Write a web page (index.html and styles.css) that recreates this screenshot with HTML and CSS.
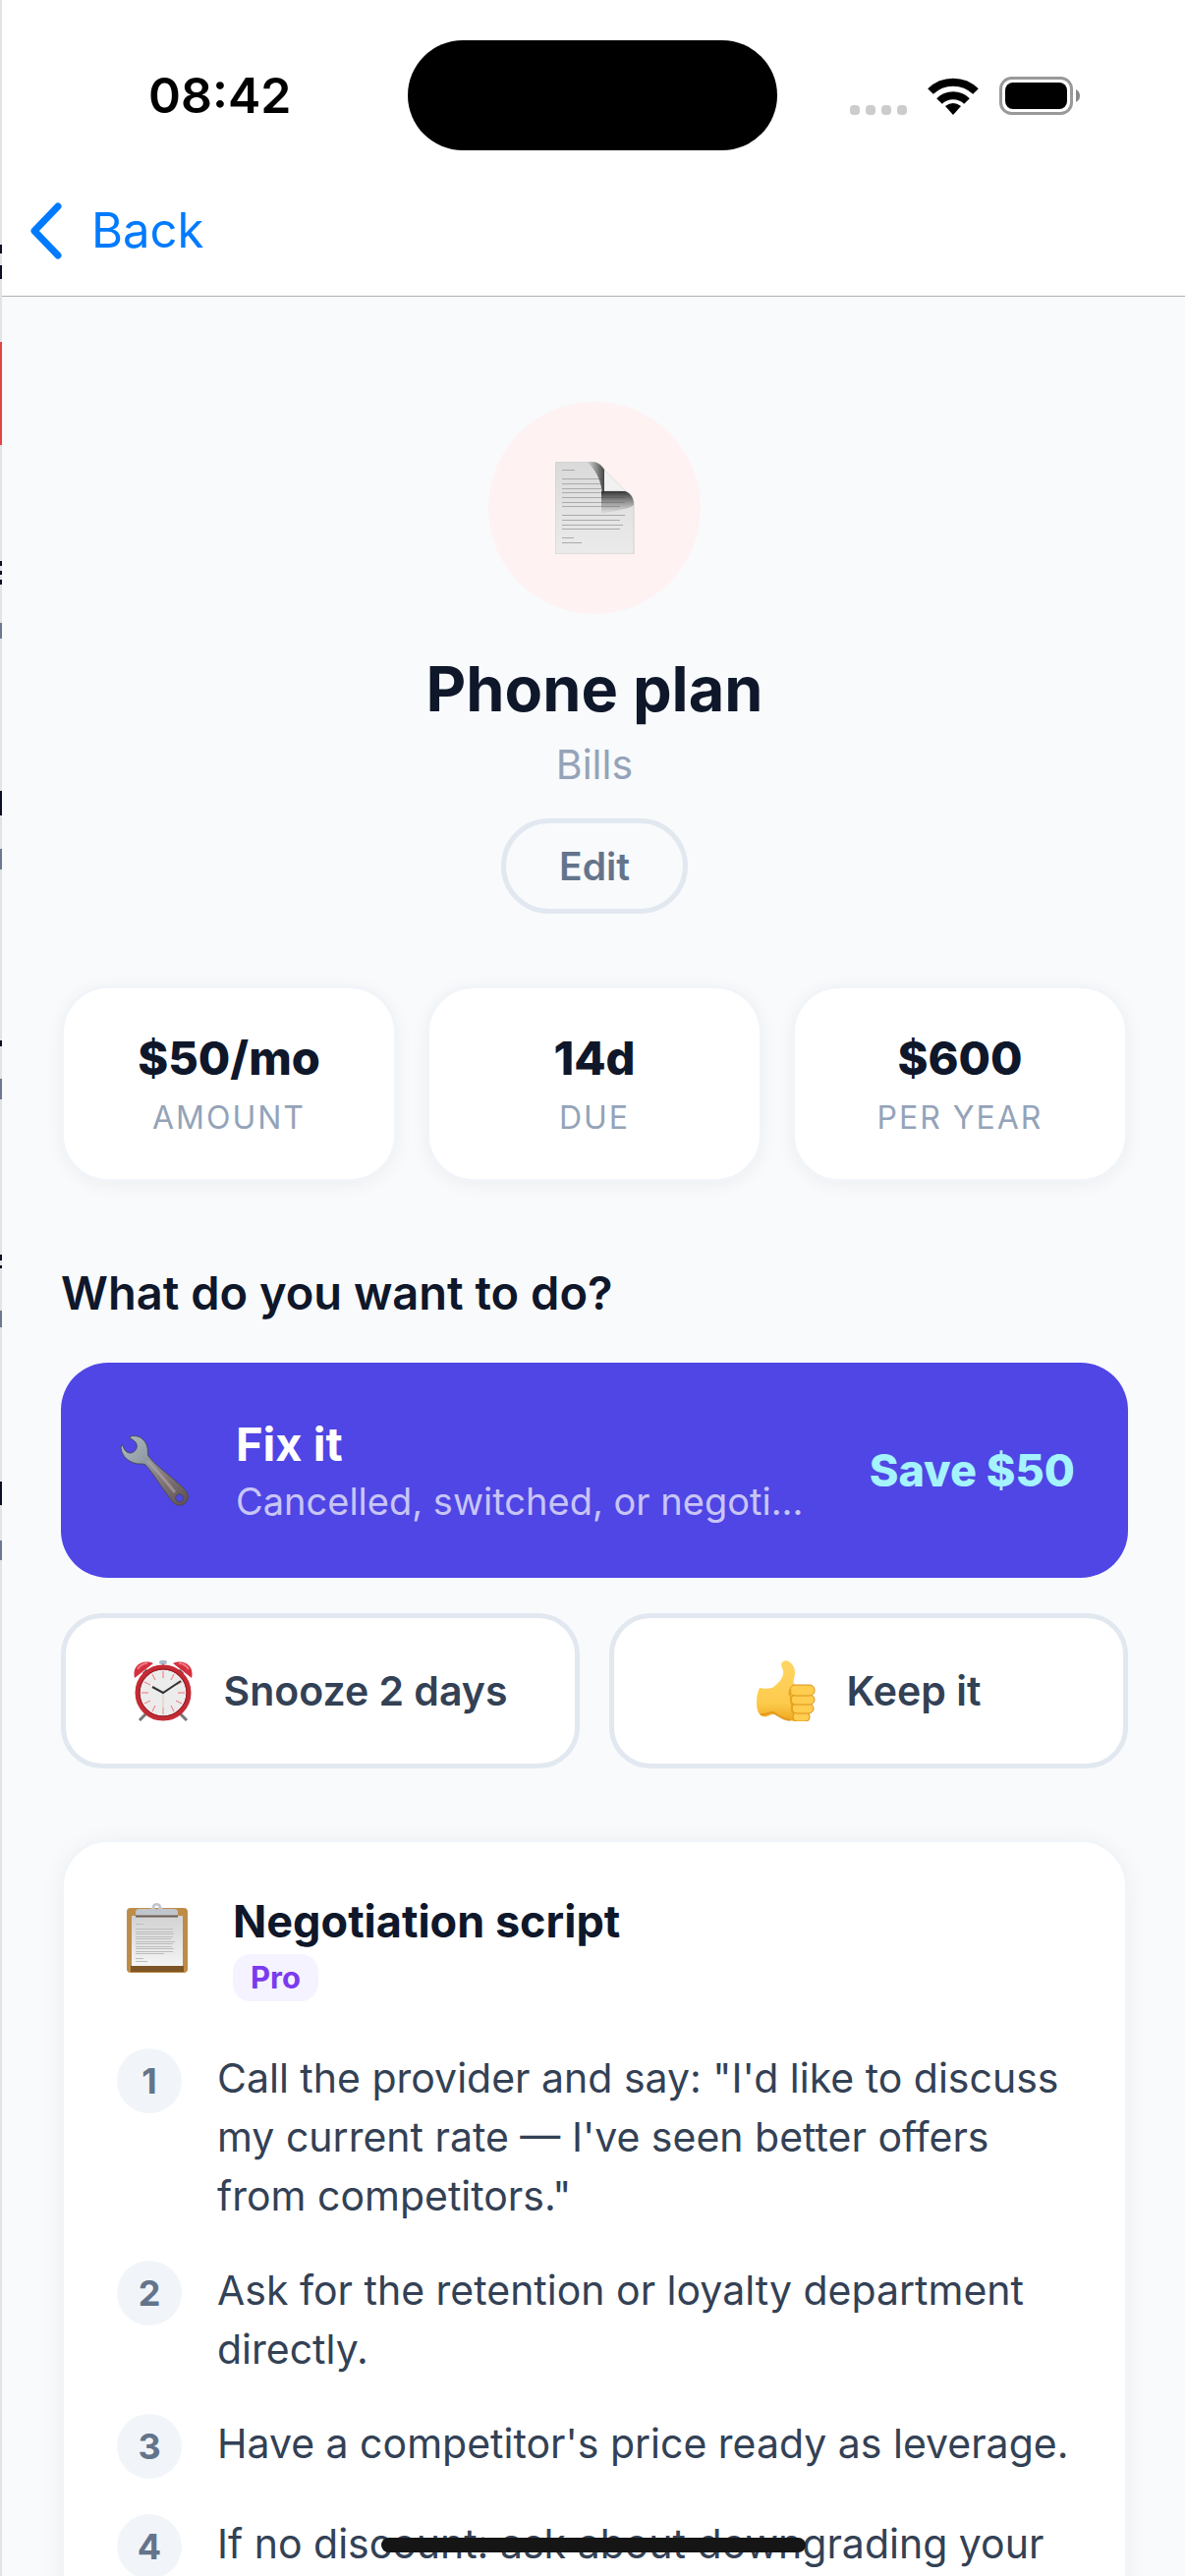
FILE: index.html
```html
<!DOCTYPE html>
<html lang="en">
<head>
  <meta charset="UTF-8">
  <meta name="viewport" content="width=device-width, initial-scale=1">
  <title>Phone plan</title>
  <link rel="stylesheet" href="styles.css">
</head>
<body>

  <!-- edge of the list screen underneath -->
  <svg class="peek" width="2" height="2622" aria-hidden="true">
    <rect width="2" height="2622" fill="#e2e3e5"/>
    <path fill="#0b1024" d="M0 249h2v9H0zM0 270h2v14H0zM0 571h2v5H0zM0 581h2v4H0zM0 590h2v5H0zM0 805h2v25H0zM0 1059h2v6H0zM0 1277h2v6H0zM0 1288h2v3H0zM0 1508h2v24H0z"/>
    <path fill="#e24444" d="M0 348h2v105H0z"/>
    <path fill="#6b7a90" d="M0 634h2v16H0zM0 864h2v21H0zM0 1098h2v21H0zM0 1334h2v17H0zM0 1568h2v20H0z"/>
  </svg>

  <div class="screen">
    <header>
      <div class="status-bar">
        <span class="time">08:42</span>
        <span class="island"></span>
        <div class="status-icons">
          <svg width="58" height="10" viewBox="0 0 58 10" fill="#ccc">
            <rect width="10" height="10" rx="4"/>
            <rect x="16" width="10" height="10" rx="4"/>
            <rect x="32" width="10" height="10" rx="4"/>
            <rect x="48" width="10" height="10" rx="4"/>
          </svg>
          <svg width="52" height="38" viewBox="0 0 52 38">
            <path d="M3 14a33 33 0 0 1 46 0M12 24a20 20 0 0 1 28 0" fill="none" stroke="#000" stroke-width="8"/>
            <path d="M26 38l-8-9q8-6 16 0z"/>
          </svg>
          <svg width="82" height="39" viewBox="0 0 82 39">
            <rect x="1.5" y="1.5" width="72" height="36" rx="11" fill="none" stroke="#999" stroke-width="3"/>
            <rect x="6" y="6" width="63" height="27" rx="8"/>
            <path d="M78 13q4 2 4 6.500t-4 6.500z" fill="#888"/>
          </svg>
        </div>
      </div>
      <nav>
        <a class="back" href="#">
          <svg width="33" height="58" viewBox="0 0 33 58">
            <path d="M29 4L5 29l24 25" fill="none" stroke="#007aff" stroke-width="7" stroke-linecap="round" stroke-linejoin="round"/>
          </svg>
          Back
        </a>
      </nav>
    </header>

    <main>
      <section class="hero">
        <div class="avatar">
          <svg width="81" height="94" viewBox="0 0 81 94">
            <defs>
              <linearGradient id="paper" x1="0" y1="0" x2="0" y2="1">
                <stop offset="0" stop-color="#dadada"/>
                <stop offset="1" stop-color="#ebebeb"/>
              </linearGradient>
              <linearGradient id="curl-left" x1="0" y1="0" x2="1" y2="0">
                <stop offset="0" stop-color="#555" stop-opacity="0"/>
                <stop offset="1" stop-color="#444"/>
              </linearGradient>
              <linearGradient id="curl-down" x1="0" y1="0" x2="0" y2="1">
                <stop offset="0" stop-color="#333"/>
                <stop offset="1" stop-color="#777" stop-opacity="0"/>
              </linearGradient>
            </defs>
            <path d="M0 0h36c7 0 11 3 14 8l22 22c5 3 8 7 8 13v51H0z" fill="url(#paper)" stroke="#cfcfcf"/>
            <path d="M7 8.500h13M7 17.500h42M7 22.500h42M7 27.500h40M7 31.500h42M7 36.500h64M7 41.500h64M7 45.500h59M7 54.500h64M7 59.500h59M7 64.500h62M7 68.500h59M7 77.500h12M7 82.500h20" stroke="#aaa"/>
            <path d="M32 0h4c7 0 11 3 14 8v22l-2 4C47 18 41 8 32 0z" fill="url(#curl-left)"/>
            <path d="M47 30h24c6 2 9 7 9 14-5 5-20 5-33 10z" fill="url(#curl-down)"/>
            <path d="M50 8l22 22c-6-2-14-1-22-1z" fill="#f1f1f1"/>
          </svg>
        </div>
        <h1>Phone plan</h1>
        <p class="category">Bills</p>
        <button class="edit">Edit</button>
      </section>

      <section class="stats">
        <div class="stat">
          <div class="stat-value">$50/mo</div>
          <div class="stat-label">AMOUNT</div>
        </div>
        <div class="stat">
          <div class="stat-value">14d</div>
          <div class="stat-label">DUE</div>
        </div>
        <div class="stat">
          <div class="stat-value">$600</div>
          <div class="stat-label">PER YEAR</div>
        </div>
      </section>

      <section class="actions">
        <h2>What do you want to do?</h2>
        <button class="fix">
          <span class="icon">
            <svg width="71" height="72" viewBox="0 0 71 72">
              <defs>
                <linearGradient id="steel" x1="0" y1="0" x2="1" y2="1">
                  <stop offset="0" stop-color="#b4c0c8"/>
                  <stop offset=".35" stop-color="#8f9aa3"/>
                  <stop offset=".6" stop-color="#85797c"/>
                  <stop offset="1" stop-color="#5d5052"/>
                </linearGradient>
              </defs>
              <path fill="url(#steel)" stroke="#4b4a55" fill-rule="evenodd" d="M11 1c8-2 15 3 17 11 1 4 0 7 1 9 7 9 17 16 25 23 5 5 13 10 15 16 2 7-4 12-10 11-5-1-8-7-11-11-7-9-13-20-22-30-3-2-7 0-12-2C6 25 1 19 1 11l2-1c1 5 4 8 8 8 5-1 7-5 6-9-1-3-4-5-7-6zM62 60a4 4 0 1 0 1 7 4 4 0 0 0-1-7z"/>
              <path d="M28 26c10 10 20 22 28 32" fill="none" stroke="#b2a6a8" stroke-width="3" opacity=".6"/>
            </svg>
          </span>
          <span class="fix-text">
            <span class="fix-title">Fix it</span>
            <span class="fix-sub">Cancelled, switched, or negoti...</span>
          </span>
          <span class="fix-save">Save $50</span>
        </button>

        <div class="action-row">
          <button class="action">
            <svg width="60" height="62" viewBox="0 0 60 62">
              <path d="M14 53l-8 8M46 53l8 8" stroke="#777" stroke-width="3"/>
              <rect x="26" y="0" width="8" height="4" rx="2" fill="#a9bccb"/>
              <path d="M30 3v4" stroke="#999" stroke-width="2"/>
              <path d="M1 18C-2 6 8-2 20 3zM59 18C62 6 52-2 40 3z" fill="#d5303f"/>
              <path d="M4 9q4-6 10-6M56 9q-4-6-10-6" fill="none" stroke="#ee7a83" stroke-width="2"/>
              <path d="M10 14l4-4M50 14l-4-4" stroke="#444" stroke-width="3"/>
              <circle cx="30" cy="33" r="26" fill="#ececec" stroke="#c42b35" stroke-width="5"/>
              <circle cx="30" cy="33" r="24" fill="none" stroke="#8f1b24" stroke-width="1"/>
              <path d="M30 11v7M30 48v7M8 33h7M45 33h7M19 14l3 6M38 46l3 6M41 14l-3 6M22 46l-3 6M11 22l6 3M43 41l6 3M49 22l-6 3M17 41l-6 3" stroke="#f0717a" stroke-width="1"/>
              <path d="M30 33v23" stroke="#d9cdb4" stroke-width="1"/>
              <path d="M19 27l11 6 18-12" fill="none" stroke="#333" stroke-width="2"/>
            </svg>
            Snooze 2 days
          </button>
          <button class="action">
            <svg width="60" height="62" viewBox="0 0 60 62">
              <defs>
                <linearGradient id="skin" x1="0" y1="0" x2="0" y2="1">
                  <stop offset="0" stop-color="#ffd564"/>
                  <stop offset=".7" stop-color="#fdcb4c"/>
                  <stop offset="1" stop-color="#eda71d"/>
                </linearGradient>
              </defs>
              <path fill="url(#skin)" d="M25 4c1-4 6-5 9-2 4 3 5 7 5 11 0 5-3 8 0 12l14 12-2 25c-12 0-21 0-28-5-4-3-8-2-12 0-7 2-11-4-11-14 0-6 1-11 3-15 4 1 9 1 13 0 5-4 10-8 11-14 1-4-2-7-2-10z"/>
              <g fill="#ffcd4f" stroke="#dc951a">
                <rect x="37" y="53" width="17" height="9" rx="4"/>
                <rect x="36" y="44" width="22" height="10" rx="5"/>
                <rect x="35" y="35" width="24" height="10" rx="5"/>
                <rect x="34" y="25" width="25" height="11" rx="5"/>
              </g>
              <path d="M35 30q-3 3 0 7 -1 4 1 8 -1 5 1 9" fill="none" stroke="#e7a424" stroke-width="2"/>
              <path d="M4 55c6 1 9-3 13-2 4 3 9 7 17 8" fill="none" stroke="#d98c17" stroke-width="2" opacity=".7"/>
            </svg>
            Keep it
          </button>
        </div>
      </section>

      <section class="script">
        <div class="script-head">
          <span class="icon">
            <svg width="62" height="71" viewBox="0 0 62 71">
              <defs>
                <linearGradient id="sheet" x1="0" y1="0" x2="0" y2="1">
                  <stop offset="0" stop-color="#d2d2d2"/>
                  <stop offset="1" stop-color="#f4f4f4"/>
                </linearGradient>
              </defs>
              <rect y="5" width="62" height="66" rx="4" fill="#bd8c49"/>
              <rect x="4" y="64" width="54" height="6" fill="#7c5426"/>
              <rect x="5" y="13" width="52" height="51" fill="url(#sheet)"/>
              <path d="M9 21.500h8M9 26.500h38M9 29.500h38M9 31.500h39M9 34.500h38M9 36.500h36M9 39.500h40M9 41.500h38M9 44.500h37M9 46.500h39M9 49.500h38M9 51.500h29M9 56.500h8M9 59.500h12" stroke="#bdbdbd"/>
              <path fill="#bfc5cb" fill-rule="evenodd" d="M9 14V9q0-3 4-3h10q3 0 3-3c1-4 8-4 9 0q0 3 3 3h10q4 0 4 3v5zM30.500 2.500a2 2 0 1 0 0 4 2 2 0 0 0 0-4z"/>
              <path d="M9 13.500h43" stroke="#6b5d52" stroke-width="2"/>
            </svg>
          </span>
          <div>
            <h3>Negotiation script</h3>
            <span class="badge">Pro</span>
          </div>
        </div>
        <ol class="steps">
          <li><span class="num">1</span><p>Call the provider and say: "I'd like to discuss my current rate — I've seen better offers from competitors."</p></li>
          <li><span class="num">2</span><p>Ask for the retention or loyalty department directly.</p></li>
          <li><span class="num">3</span><p>Have a competitor's price ready as leverage.</p></li>
          <li><span class="num">4</span><p>If no discount: ask about downgrading your</p></li>
        </ol>
      </section>
    </main>

    <div class="home-indicator"></div>
  </div>

</body>
</html>
```

FILE: styles.css
```css
* {
  box-sizing: border-box;
}
body {
  margin: 0;
  height: 100vh;
  display: flex;
  overflow: hidden;
  background: #f8fafc;
  color: #0f172a;
  font-family: Inter, "Liberation Sans", sans-serif;
}
h1, h2, h3, p, ol {
  margin: 0;
  padding: 0;
}
svg {
  display: block;
  flex: none;
}
button {
  font-family: inherit;
  cursor: pointer;
}
.peek {
  flex: none;
}
.screen {
  position: relative;
  flex: 1;
  min-width: 0;
  display: flex;
  flex-direction: column;
}

/* header */
header {
  flex: none;
  background: #fff;
  border-bottom: 1px solid #b2b2b2;
}
.status-bar {
  display: grid;
  grid-template-columns: 1fr 376px 1fr;
  align-items: center;
  padding: 41px 2px 0 0;
}
.time {
  padding-left: 149px;
  font-size: 50px;
  line-height: 60px;
  font-weight: 600;
  color: #000;
}
.island {
  height: 112px;
  border-radius: 56px;
  background: #000;
}
.status-icons {
  display: flex;
  align-items: flex-end;
  gap: 21px;
  padding-left: 74px;
}
nav {
  height: 148px;
  padding: 52px 28px 0;
}
.back {
  display: inline-flex;
  align-items: center;
  gap: 30px;
  color: #007aff;
  font-size: 49px;
  line-height: 60px;
  text-decoration: none;
}

/* content */
main {
  flex: 1;
  min-height: 0;
  overflow: hidden;
  padding: 107px 58px 0 60px;
}
.hero {
  display: flex;
  flex-direction: column;
  align-items: center;
}
.avatar {
  width: 216px;
  height: 216px;
  border-radius: 50%;
  background: #fef2f2;
  display: flex;
  align-items: center;
  justify-content: center;
}
h1 {
  margin-top: 36px;
  font-size: 63px;
  line-height: 80px;
  font-weight: 700;
}
.category {
  margin-top: 12px;
  font-size: 41px;
  line-height: 50px;
  color: #94a3b8;
}
.edit {
  margin-top: 30px;
  padding: 18px 54px;
  border: 5px solid #e2e8f0;
  border-radius: 60px;
  background: none;
  color: #64748b;
  font-size: 39px;
  line-height: 51px;
  font-weight: 600;
}

.stats {
  display: grid;
  grid-template-columns: repeat(3, 1fr);
  gap: 30px;
  margin-top: 73px;
}
.stat {
  padding: 42px 12px;
  border: 3px solid #f1f5f9;
  border-radius: 48px;
  background: #fff;
  box-shadow: 0 3px 18px rgba(0, 0, 0, 0.05);
  text-align: center;
}
.stat-value {
  font-size: 47px;
  line-height: 58px;
  font-weight: 800;
}
.stat-label {
  margin-top: 12px;
  font-size: 32px;
  line-height: 40px;
  letter-spacing: 2px;
  color: #94a3b8;
}

.actions {
  margin-top: 84px;
}
h2 {
  font-size: 47px;
  line-height: 58px;
  font-weight: 600;
}
.icon {
  flex: none;
  width: 82px;
  display: flex;
  justify-content: center;
}
.fix {
  width: 100%;
  margin-top: 42px;
  padding: 54px;
  display: flex;
  align-items: center;
  border: 0;
  border-radius: 48px;
  background: #4f46e5;
  color: #fff;
  text-align: left;
}
.fix-text {
  flex: 1;
  min-width: 0;
  display: flex;
  flex-direction: column;
  gap: 5px;
  margin: 0 42px;
}
.fix-title {
  font-size: 47px;
  line-height: 58px;
  font-weight: 700;
}
.fix-sub {
  overflow: hidden;
  white-space: nowrap;
  text-overflow: ellipsis;
  font-size: 38px;
  line-height: 48px;
  color: rgba(255, 255, 255, 0.7);
}
.fix-save {
  font-size: 45px;
  line-height: 54px;
  font-weight: 800;
  color: #a5f3fc;
}
.action-row {
  display: grid;
  grid-template-columns: 1fr 1fr;
  gap: 30px;
  margin-top: 36px;
}
.action {
  display: flex;
  align-items: center;
  justify-content: center;
  gap: 32px;
  padding: 43px 12px;
  border: 5px solid #e2e8f0;
  border-radius: 42px;
  background: #fff;
  color: #334155;
  font-size: 41px;
  line-height: 50px;
  font-weight: 600;
}

.script {
  margin-top: 72px;
  padding: 54px;
  border: 3px solid #f1f5f9;
  border-radius: 48px;
  background: #fff;
  box-shadow: 0 3px 24px rgba(0, 0, 0, 0.05);
}
.script-head {
  display: flex;
  gap: 36px;
}
.script-head .icon {
  padding-top: 8px;
}
h3 {
  font-size: 45px;
  line-height: 54px;
  font-weight: 700;
}
.badge {
  display: block;
  width: fit-content;
  margin-top: 6px;
  padding: 6px 18px;
  border-radius: 18px;
  background: #f5f3ff;
  color: #7c3aed;
  font-size: 31px;
  line-height: 36px;
  font-weight: 700;
}
.steps {
  display: flex;
  flex-direction: column;
  gap: 36px;
  margin-top: 48px;
  list-style: none;
}
.steps li {
  display: flex;
  align-items: flex-start;
  gap: 36px;
}
.num {
  flex: none;
  width: 66px;
  border-radius: 50%;
  background: #f1f5f9;
  color: #64748b;
  font-size: 36px;
  line-height: 66px;
  font-weight: 700;
  text-align: center;
}
.steps p {
  font-size: 41px;
  line-height: 60px;
  color: #334155;
}

.home-indicator {
  position: absolute;
  bottom: 24px;
  left: 50%;
  width: 432px;
  height: 15px;
  margin-left: -216px;
  border-radius: 8px;
  background: #151515;
}
```
